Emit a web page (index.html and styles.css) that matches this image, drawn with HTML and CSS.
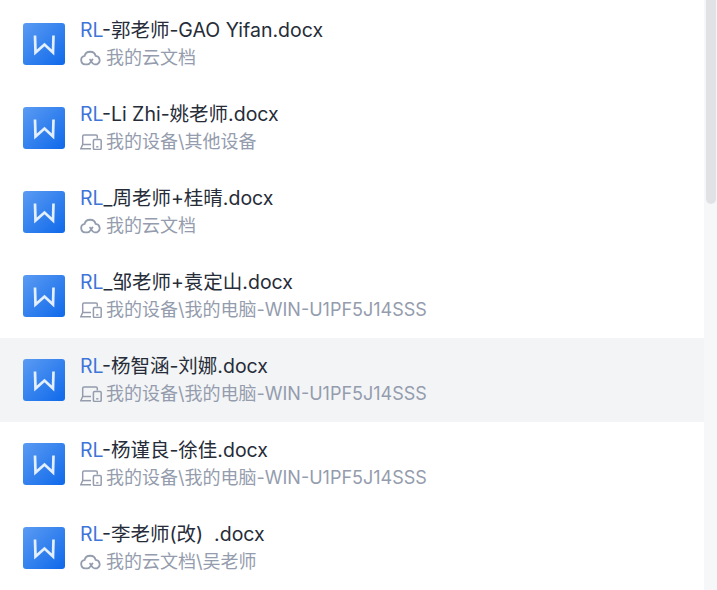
FILE: index.html
```html
<!DOCTYPE html>
<html lang="zh-CN">
<head>
    <meta charset="UTF-8">
    <meta name="viewport" content="width=device-width, initial-scale=1.0">
    <title>搜索结果</title>
    <link rel="stylesheet" href="styles.css">
</head>
<body>
    <svg class="sprites" width="0" height="0">
        <defs>
            <linearGradient id="word-bg" x1="0" y1="0" x2="1" y2="1">
                <stop offset="0" stop-color="#5b9bf3"/>
                <stop offset="1" stop-color="#0f69ea"/>
            </linearGradient>
            <symbol id="word" viewBox="0 0 42 42">
                <rect width="42" height="42" rx="3" fill="url(#word-bg)"/>
                <path d="M12 12.5 L12.5 29.5 L21.5 21.5 L30 29.5 L30.5 12.5" fill="none" stroke="#e4effd" stroke-width="2.7"/>
            </symbol>
            <symbol id="cloud" viewBox="0 0 22 16">
                <path d="M5.2 14.4 A4.3 4.3 0 0 1 4.6 5.9 A5.6 5.1 0 0 1 15.6 5.9 A4.4 4.4 0 0 1 16.8 14.4 H14.5 C12 14.4 11.5 10.8 9.5 9.1 M5.2 14.4 H7.5 C10 14.4 11 10.8 13 9" fill="none" stroke="currentColor" stroke-width="1.8"/>
            </symbol>
            <symbol id="device" viewBox="0 0 22 16">
                <path d="M2.7 10.5 V2.3 Q2.7 1 4 1 H16 Q17.3 1 17.3 2.3 V4.5 M2.7 10.5 L0.8 14.8 H11 M2.7 10.5 H11" fill="none" stroke="currentColor" stroke-width="1.5"/>
                <rect x="13.4" y="5.6" width="7.8" height="9.8" rx="1.2" fill="none" stroke="currentColor" stroke-width="1.5"/>
                <path d="M16.2 12.8 H18.4" stroke="currentColor" stroke-width="1.5"/>
            </symbol>
        </defs>
    </svg>

    <div class="page">
        <ul class="file-list">
            <li class="file-row">
                <svg class="file-icon"><use href="#word"/></svg>
                <div class="file-info">
                    <div class="file-name"><span class="hit">RL</span>-郭老师-GAO Yifan.docx</div>
                    <div class="file-path"><svg class="path-icon"><use href="#cloud"/></svg>我的云文档</div>
                </div>
            </li>
            <li class="file-row">
                <svg class="file-icon"><use href="#word"/></svg>
                <div class="file-info">
                    <div class="file-name"><span class="hit">RL</span>-Li Zhi-姚老师.docx</div>
                    <div class="file-path"><svg class="path-icon"><use href="#device"/></svg>我的设备\其他设备</div>
                </div>
            </li>
            <li class="file-row">
                <svg class="file-icon"><use href="#word"/></svg>
                <div class="file-info">
                    <div class="file-name"><span class="hit">RL</span>_周老师+桂晴.docx</div>
                    <div class="file-path"><svg class="path-icon"><use href="#cloud"/></svg>我的云文档</div>
                </div>
            </li>
            <li class="file-row">
                <svg class="file-icon"><use href="#word"/></svg>
                <div class="file-info">
                    <div class="file-name"><span class="hit">RL</span>_邹老师+袁定山.docx</div>
                    <div class="file-path"><svg class="path-icon"><use href="#device"/></svg>我的设备\我的电脑-WIN-U1PF5J14SSS</div>
                </div>
            </li>
            <li class="file-row active">
                <svg class="file-icon"><use href="#word"/></svg>
                <div class="file-info">
                    <div class="file-name"><span class="hit">RL</span>-杨智涵-刘娜.docx</div>
                    <div class="file-path"><svg class="path-icon"><use href="#device"/></svg>我的设备\我的电脑-WIN-U1PF5J14SSS</div>
                </div>
            </li>
            <li class="file-row">
                <svg class="file-icon"><use href="#word"/></svg>
                <div class="file-info">
                    <div class="file-name"><span class="hit">RL</span>-杨谨良-徐佳.docx</div>
                    <div class="file-path"><svg class="path-icon"><use href="#device"/></svg>我的设备\我的电脑-WIN-U1PF5J14SSS</div>
                </div>
            </li>
            <li class="file-row">
                <svg class="file-icon"><use href="#word"/></svg>
                <div class="file-info">
                    <div class="file-name"><span class="hit">RL</span>-李老师(改)&nbsp;&nbsp;.docx</div>
                    <div class="file-path"><svg class="path-icon"><use href="#cloud"/></svg>我的云文档\吴老师</div>
                </div>
            </li>
        </ul>
        <div class="scrollbar">
            <div class="scrollbar-thumb"></div>
        </div>
    </div>
</body>
</html>
```

FILE: styles.css
```css
html, body {
    height: 100%;
}

body {
    margin: 0;
    overflow: hidden;
    background-color: #fff;
    font-family: Inter, "Noto Sans CJK SC", sans-serif;
}

.sprites {
    position: absolute;
}

.page {
    display: flex;
    height: 590px;
}

.file-list {
    flex: 1;
    list-style: none;
    margin: 0;
    padding: 2px 0 0;
}

.file-row {
    display: flex;
    align-items: center;
    gap: 15px;
    height: 84px;
    padding-left: 23px;
}

.file-row.active {
    background-color: #f3f4f6;
}

.file-icon {
    flex: none;
    width: 42px;
    height: 42px;
}

.file-info {
    display: flex;
    flex-direction: column;
    gap: 3px;
}

.file-name {
    font-size: 19.5px;
    line-height: 25px;
    color: #262c38;
}

.hit {
    color: #3f74d8;
}

.file-path {
    display: flex;
    align-items: center;
    gap: 4px;
    font-size: 18px;
    line-height: 24px;
    color: #949cad;
}

.path-icon {
    flex: none;
    width: 22px;
    height: 16px;
}

.scrollbar {
    flex: none;
    width: 10px;
    padding: 0 1px 0 2px;
    background-color: #f6f7f8;
}

.scrollbar-thumb {
    height: 204px;
    background-color: #e0e2e5;
    border-radius: 0 0 5px 5px;
}
```
